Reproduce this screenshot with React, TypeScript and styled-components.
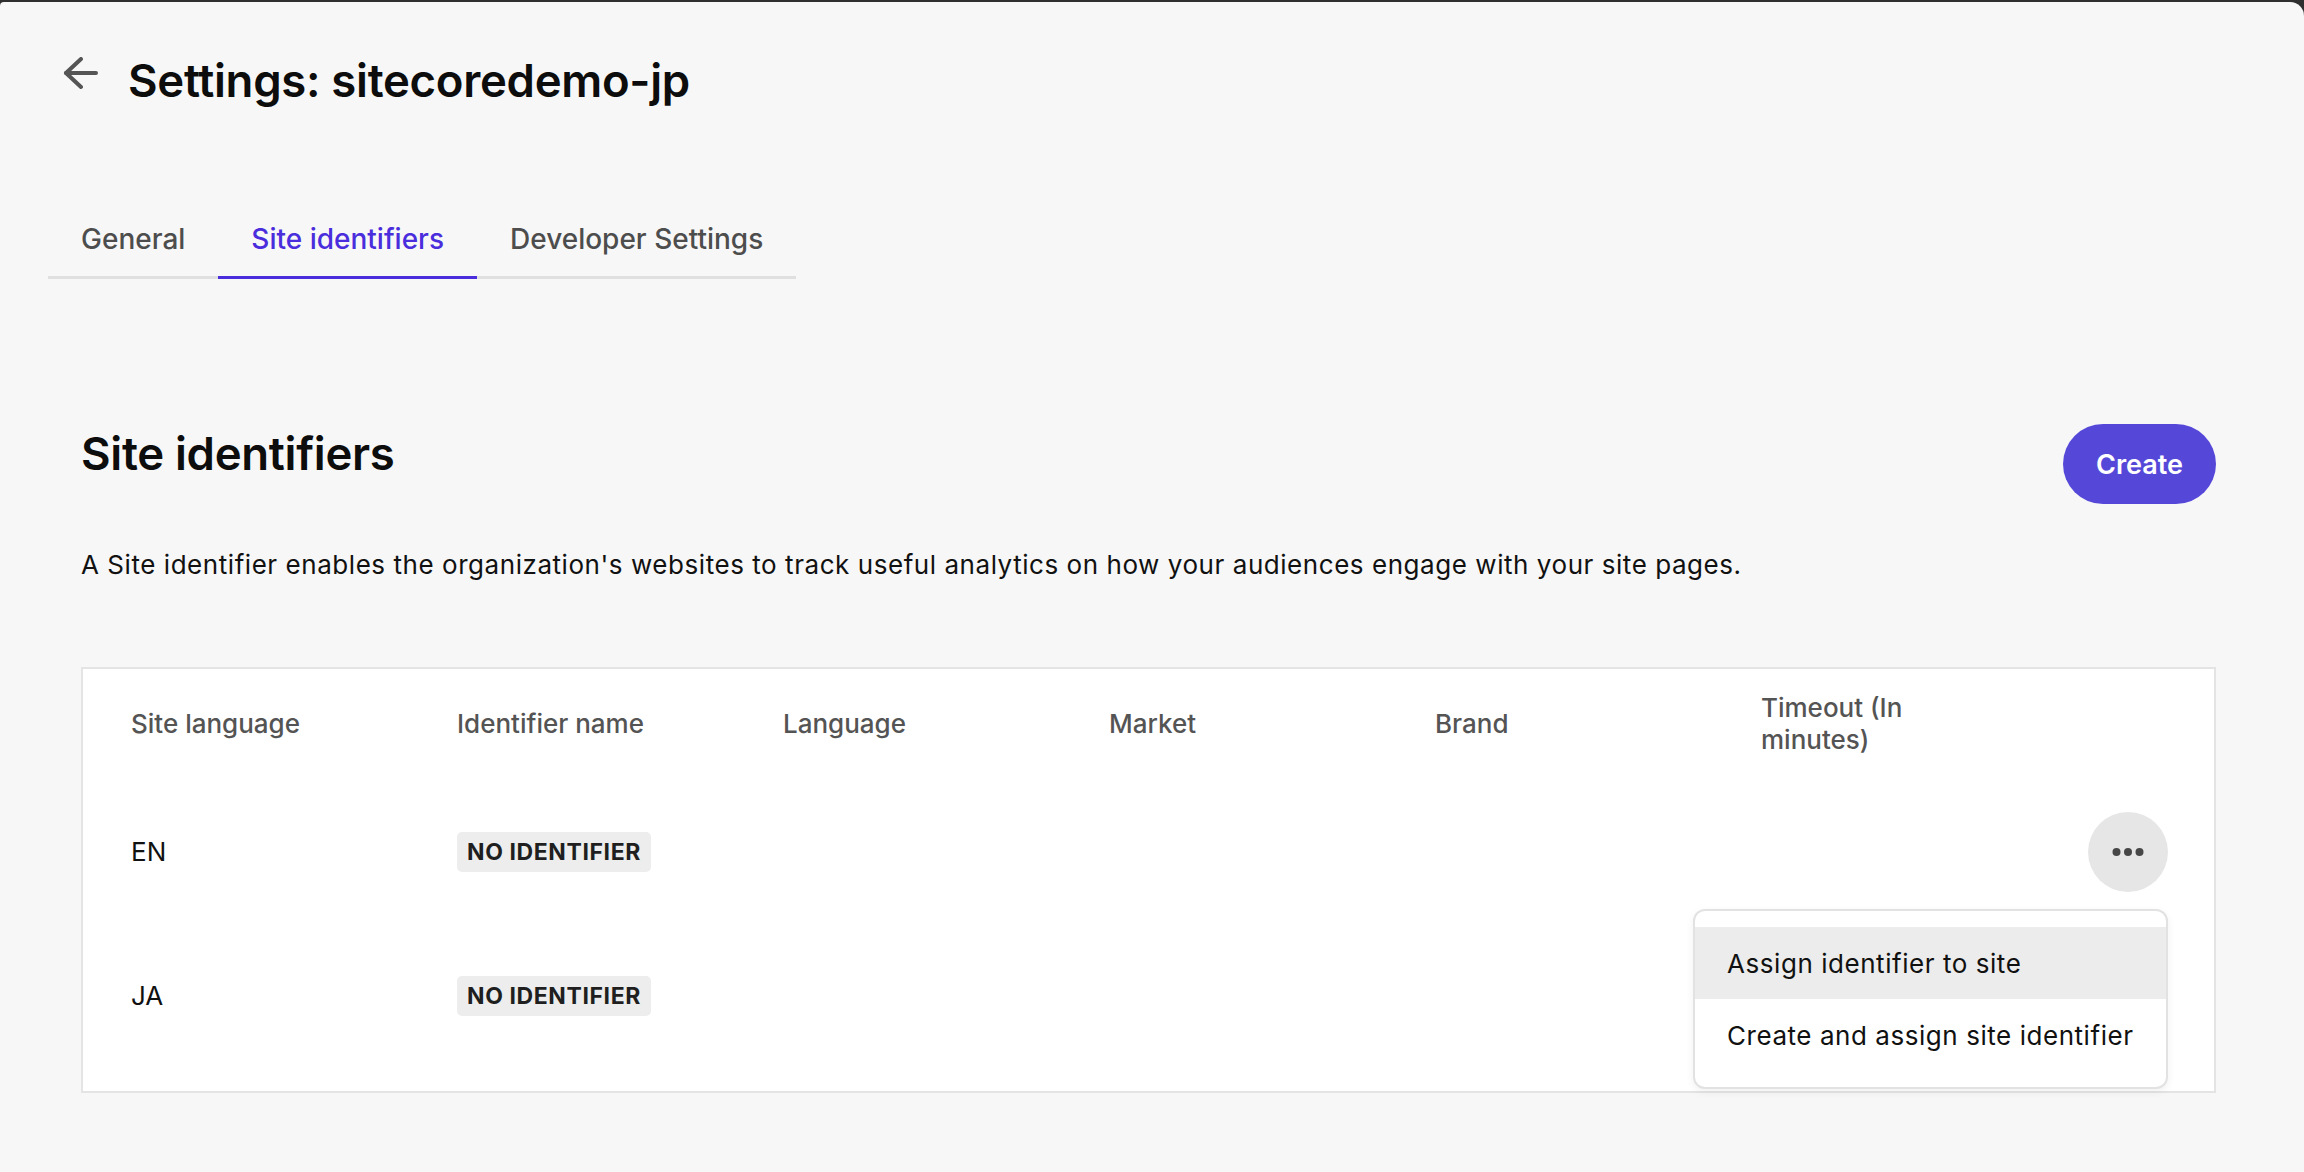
import React from "react";
import styled, { createGlobalStyle } from "styled-components";

const GlobalStyle = createGlobalStyle`
  * { box-sizing: border-box; }
  html, body { margin: 0; padding: 0; }
  body {
    background: #2f2f2f;
    font-family: Inter, "Noto Sans", "Liberation Sans", sans-serif;
    color: #111;
  }
`;

const Window = styled.div`
  margin-top: 2px;
  min-height: calc(100vh - 2px);
  background: #f7f7f7;
  border-radius: 4px 14px 0 0;
  overflow: hidden;
`;

const Header = styled.header`
  display: flex;
  align-items: flex-start;
  gap: 30px;
  padding: 51px 0 0 63px;
`;

const BackButton = styled.button`
  width: 35px;
  height: 34px;
  margin-top: 4px;
  padding: 0;
  border: none;
  background: transparent;
  color: #555;
  display: flex;
  align-items: center;
  justify-content: center;
  cursor: pointer;
`;

const Title = styled.h1`
  margin: 0;
  font-size: 45.5px;
  line-height: 55px;
  font-weight: 600;
  color: #0d0d0d;
  letter-spacing: -0.3px;
`;

const TabList = styled.nav`
  display: flex;
  width: fit-content;
  margin: 94px 0 0 48px;
  border-bottom: 3px solid #e0e0e0;
`;

const Tab = styled.button<{ $active?: boolean }>`
  padding: 16px 33px 16px 33px;
  margin-bottom: -3px;
  border: none;
  border-bottom: 3px solid ${(p) => (p.$active ? "#4a2ddc" : "transparent")};
  background: transparent;
  font-family: inherit;
  font-size: 28px;
  line-height: 42px;
  font-weight: 500;
  color: ${(p) => (p.$active ? "#4a2ddc" : "#4d4d4d")};
  cursor: pointer;
`;

const Main = styled.main`
  padding: 145px 88px 60px 81px;
`;

const SectionHead = styled.div`
  display: flex;
  justify-content: space-between;
  align-items: flex-start;
`;

const Heading = styled.h2`
  margin: 2px 0 0;
  font-size: 45.5px;
  line-height: 55px;
  font-weight: 600;
  color: #0d0d0d;
  letter-spacing: -0.3px;
`;

const PrimaryButton = styled.button`
  height: 80px;
  padding: 0 33px;
  border: none;
  border-radius: 40px;
  background: #5548d9;
  color: #fff;
  font-family: inherit;
  font-size: 27px;
  font-weight: 600;
  cursor: pointer;
`;

const Description = styled.p`
  margin: 42px 0 0;
  font-size: 26px;
  line-height: 37px;
  letter-spacing: 0.55px;
  color: #111;
`;

const Table = styled.div`
  margin-top: 84px;
  background: #fff;
  border: 2px solid #e4e4e4;
  padding: 0 46px 23px 48px;
`;

const Row = styled.div<{ $head?: boolean }>`
  display: grid;
  grid-template-columns: repeat(5, 326px) 170px 1fr;
  align-items: center;
  min-height: ${(p) => (p.$head ? "111px" : "144px")};
  padding: ${(p) => (p.$head ? "23px 0 24px" : "0")};
`;

const HeadCell = styled.div`
  font-size: 26px;
  line-height: 32px;
  font-weight: 500;
  color: #545454;
  padding-right: 16px;
`;

const Cell = styled.div`
  font-size: 26px;
  line-height: 32px;
  color: #111;
`;

const ActionCell = styled.div`
  position: relative;
  display: flex;
  justify-content: flex-end;
`;

const Badge = styled.span`
  display: inline-block;
  height: 40px;
  padding: 0 10px;
  border-radius: 5px;
  background: #ededed;
  color: #1f1f1f;
  font-size: 23px;
  line-height: 40px;
  font-weight: 700;
  letter-spacing: 0.6px;
  text-transform: uppercase;
`;

const IconButton = styled.button`
  width: 80px;
  height: 80px;
  border-radius: 50%;
  border: none;
  background: #e6e6e6;
  display: flex;
  align-items: center;
  justify-content: center;
  cursor: pointer;
`;

const Menu = styled.div`
  position: absolute;
  top: 97px;
  right: 0;
  width: 475px;
  padding: 16px 0;
  background: #fff;
  border: 2px solid #e2e2e2;
  border-radius: 12px;
  box-shadow: 0 3px 8px rgba(0, 0, 0, 0.06);
  z-index: 2;
`;

const MenuItem = styled.div<{ $highlight?: boolean }>`
  height: 72px;
  display: flex;
  align-items: center;
  padding: 0 20px 0 32px;
  font-size: 26px;
  letter-spacing: 0.55px;
  white-space: nowrap;
  color: #111;
  background: ${(p) => (p.$highlight ? "#ececec" : "transparent")};
`;

const ArrowIcon = () => (
  <svg width="35" height="34" viewBox="0 0 35 34" fill="none" stroke="currentColor" strokeWidth="4" strokeLinecap="round" strokeLinejoin="round">
    <path d="M3 16H33" />
    <path d="M18 2L3 16L18 30" />
  </svg>
);

const DotsIcon = () => (
  <svg width="32" height="10" viewBox="0 0 32 10" fill="#474747">
    <circle cx="4.5" cy="5" r="4" />
    <circle cx="16" cy="5" r="4" />
    <circle cx="27.5" cy="5" r="4" />
  </svg>
);

const headers = ["Site language", "Identifier name", "Language", "Market", "Brand", "Timeout (In minutes)"];
const rows = [
  { lang: "EN", menu: true },
  { lang: "JA", menu: false },
];

export default function App() {
  return (
    <>
      <GlobalStyle />
      <Window>
        <Header>
          <BackButton aria-label="Back">
            <ArrowIcon />
          </BackButton>
          <Title>Settings: sitecoredemo-jp</Title>
        </Header>
        <TabList>
          <Tab>General</Tab>
          <Tab $active>Site identifiers</Tab>
          <Tab>Developer Settings</Tab>
        </TabList>
        <Main>
          <SectionHead>
            <Heading>Site identifiers</Heading>
            <PrimaryButton>Create</PrimaryButton>
          </SectionHead>
          <Description>
            A Site identifier enables the organization's websites to track useful analytics on how your audiences engage with your site pages.
          </Description>
          <Table>
            <Row $head>
              {headers.map((h) => (
                <HeadCell key={h}>{h}</HeadCell>
              ))}
              <div />
            </Row>
            {rows.map((r) => (
              <Row key={r.lang}>
                <Cell>{r.lang}</Cell>
                <Cell>
                  <Badge>No identifier</Badge>
                </Cell>
                <Cell />
                <Cell />
                <Cell />
                <Cell />
                <ActionCell>
                  {r.menu && (
                    <>
                      <IconButton aria-label="More actions">
                        <DotsIcon />
                      </IconButton>
                      <Menu>
                        <MenuItem $highlight>Assign identifier to site</MenuItem>
                        <MenuItem>Create and assign site identifier</MenuItem>
                      </Menu>
                    </>
                  )}
                </ActionCell>
              </Row>
            ))}
          </Table>
        </Main>
      </Window>
    </>
  );
}
